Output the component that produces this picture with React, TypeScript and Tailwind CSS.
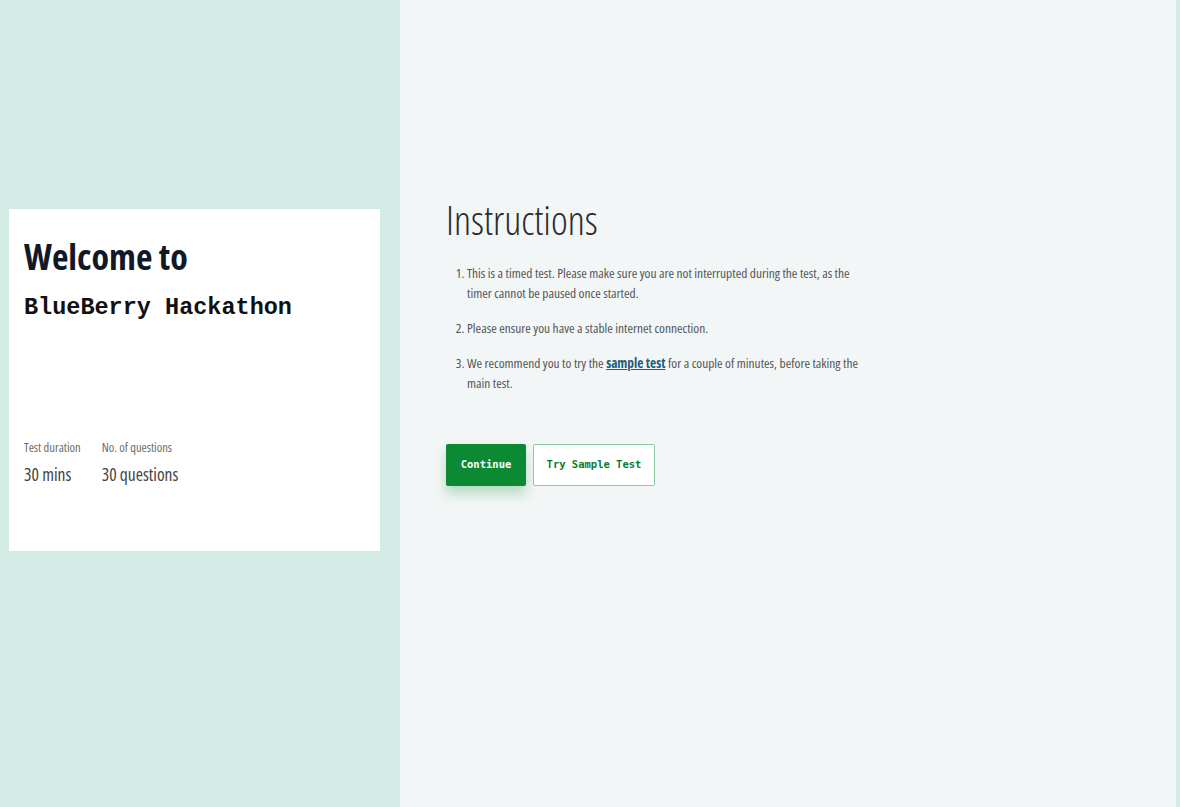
import React from 'react';

const App: React.FC = () => {
  return (
    <div className="flex h-[807px] w-[1180px] overflow-hidden font-['Open_Sans',sans-serif] [font-stretch:75%]">
      {/* Left panel */}
      <div className="w-[400px] shrink-0 bg-[#d2ece5] pl-[9px] pt-[209px]">
        <div className="flex h-[342px] w-[371px] flex-col bg-white px-[15px] pt-[26px]">
          <h1 className="text-[36px] font-bold leading-[44px] text-[#111827]">Welcome to</h1>
          <div className="mt-[14px] font-['Liberation_Mono',monospace] text-[23.5px] font-bold leading-[30px] text-[#111]">
            BlueBerry Hackathon
          </div>
          <div className="mt-[117px] flex gap-[21px]">
            <div>
              <div className="text-[12.5px] leading-[16px] text-[#6b6b6b]">Test duration</div>
              <div className="mt-[7px] text-[17.5px] leading-[22px] text-[#444]">30 mins</div>
            </div>
            <div>
              <div className="text-[12.5px] leading-[16px] text-[#6b6b6b]">No. of questions</div>
              <div className="mt-[7px] text-[17.5px] leading-[22px] text-[#444]">30 questions</div>
            </div>
          </div>
        </div>
      </div>

      {/* Right panel */}
      <div className="flex-1 bg-[#f2f6f6] pl-[46px] pt-[195px]">
        <h2 className="text-[40px] font-light leading-[50px] text-[#2b2b2b]">Instructions</h2>
        <ol className="mt-[18px] w-[426px] list-decimal pl-[21px] text-[13.4px] leading-[20px] text-[#555]">
          <li>
            This is a timed test. Please make sure you are not interrupted during the test, as the timer cannot be paused once started.
          </li>
          <li className="mt-[15px]">Please ensure you have a stable internet connection.</li>
          <li className="mt-[15px]">
            We recommend you to try the{' '}
            <a href="#" className="font-bold text-[#1d5d7e] underline">
              sample test
            </a>{' '}
            for a couple of minutes, before taking the main test.
          </li>
        </ol>
        <div className="mt-[51px] flex gap-[7px] font-['DejaVu_Sans_Mono',monospace] text-[10.5px] font-bold">
          <button className="h-[42px] w-[80px] rounded-[2px] bg-[#0b8a33] text-white shadow-[0_8px_12px_rgba(11,138,51,0.25)]">
            Continue
          </button>
          <button className="h-[42px] w-[122px] rounded-[2px] border border-[#8ccb9f] bg-white text-[#0b7a2e]">
            Try Sample Test
          </button>
        </div>
      </div>
      <div className="w-[4px] shrink-0 bg-[#d2ece5]" />
    </div>
  );
};

export default App;
